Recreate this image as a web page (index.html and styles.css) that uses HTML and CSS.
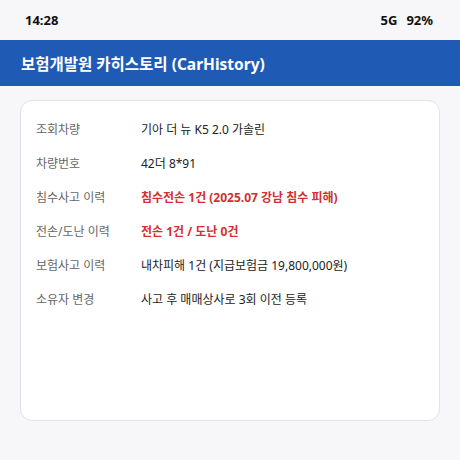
FILE: index.html
```html
<!DOCTYPE html>
<html lang="ko">
<head>
<meta charset="utf-8">
<link rel="stylesheet" href="styles.css">
</head>
<body>
<div class="status">
  <span class="time">14:28</span>
  <span class="right"><span>5G</span><span>92%</span></span>
</div>
<header class="appbar">보험개발원 카히스토리 (CarHistory)</header>
<main class="content">
  <section class="card">
    <div class="row"><span class="label">조회차량</span><span class="value">기아 더 뉴 K5 2.0 가솔린</span></div>
    <div class="row"><span class="label">차량번호</span><span class="value">42더 8*91</span></div>
    <div class="row"><span class="label">침수사고 이력</span><span class="value danger">침수전손 1건 (2025.07 강남 침수 피해)</span></div>
    <div class="row"><span class="label">전손/도난 이력</span><span class="value danger">전손 1건 / 도난 0건</span></div>
    <div class="row"><span class="label">보험사고 이력</span><span class="value">내차피해 1건 (지급보험금 19,800,000원)</span></div>
    <div class="row"><span class="label">소유자 변경</span><span class="value">사고 후 매매상사로 3회 이전 등록</span></div>
  </section>
</main>
</body>
</html>
```
FILE: styles.css
```css
html, body {
  margin: 0;
  padding: 0;
}
body {
  width: 460px;
  height: 460px;
  background: #f7f7fa;
  font-family: "Noto Sans", "Noto Sans CJK KR", sans-serif;
  color: #222;
  overflow: hidden;
}
.status {
  height: 40px;
  display: flex;
  align-items: center;
  justify-content: space-between;
  padding: 0 27px 0 25px;
  font-size: 13px;
  font-weight: 700;
  color: #111;
}
.status .right {
  display: flex;
  gap: 9px;
}
.appbar {
  height: 46px;
  background: #1f5bb4;
  color: #fff;
  display: flex;
  align-items: center;
  padding-left: 21px;
  font-size: 15.5px;
  font-weight: 700;
}
.content {
  padding: 14px 20px;
}
.card {
  background: #fff;
  border: 1px solid #e2e2e6;
  border-radius: 12px;
  height: 321px;
  box-sizing: border-box;
  padding: 11px 15px;
}
.row {
  display: flex;
  align-items: center;
  height: 34px;
  font-size: 12px;
}
.label {
  width: 105px;
  flex: none;
  color: #666;
}
.value {
  color: #222;
}
.value.danger {
  color: #d32f2f;
  font-weight: 700;
}
```
